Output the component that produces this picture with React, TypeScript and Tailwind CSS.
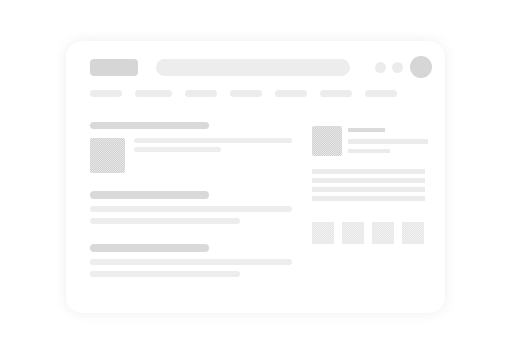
const pills = [32, 37, 32, 32, 32, 32, 32]

function Thumb({ className }: { className: string }) {
  return (
    <div
      className={`shrink-0 rounded-[2px] bg-[repeating-conic-gradient(#d2d2d2_0_25%,#e6e6e6_0_50%)] bg-[length:2px_2px] ${className}`}
    />
  )
}

function Section() {
  return (
    <div className="flex flex-col">
      <div className="h-[8px] w-[119px] rounded-full bg-[#d9d9d9]" />
      <div className="mt-[7px] h-[6px] w-[202px] rounded-full bg-[#ededed]" />
      <div className="mt-[6px] h-[6px] w-[150px] rounded-full bg-[#ededed]" />
    </div>
  )
}

export default function App() {
  return (
    <div className="h-[342px] w-[515px] bg-white pl-[66px] pt-[41px]">
      <div className="h-[272px] w-[379px] rounded-[16px] bg-white pl-[24px] pt-[15px] shadow-[0_0_14px_rgba(0,0,0,0.07)]">
        {/* header */}
        <div className="flex h-[22px] items-center">
          <div className="h-[17px] w-[48px] rounded-[4px] bg-[#d6d6d6]" />
          <div className="ml-[18px] h-[17px] w-[194px] rounded-full bg-[#ededed]" />
          <div className="ml-[25px] h-[11px] w-[11px] rounded-full bg-[#ececec]" />
          <div className="ml-[6px] h-[11px] w-[11px] rounded-full bg-[#ececec]" />
          <div className="ml-[7px] h-[22px] w-[22px] rounded-full bg-[#d6d6d6]" />
        </div>

        {/* nav */}
        <div className="mt-[12px] flex gap-[13px]">
          {pills.map((w, i) => (
            <div key={i} className="h-[7px] rounded-full bg-[#ececec]" style={{ width: w }} />
          ))}
        </div>

        <div className="mt-[25px] flex gap-[20px]">
          {/* left column */}
          <div className="flex w-[202px] flex-col">
            <div className="h-[7px] w-[119px] rounded-full bg-[#d9d9d9]" />
            <div className="mt-[9px] flex gap-[9px]">
              <Thumb className="h-[35px] w-[35px]" />
              <div className="flex flex-col pt-[0px]">
                <div className="h-[5px] w-[158px] rounded-full bg-[#ededed]" />
                <div className="mt-[4px] h-[5px] w-[87px] rounded-full bg-[#ededed]" />
              </div>
            </div>
            <div className="mt-[18px]">
              <Section />
            </div>
            <div className="mt-[20px]">
              <Section />
            </div>
          </div>

          {/* right column */}
          <div className="flex w-[116px] flex-col pt-[4px]">
            <div className="flex gap-[6px]">
              <Thumb className="h-[30px] w-[30px]" />
              <div className="flex flex-col pt-[2px]">
                <div className="h-[4px] w-[37px] bg-[#dadada]" />
                <div className="mt-[7px] h-[5px] w-[80px] bg-[#ebebeb]" />
                <div className="mt-[5px] h-[4px] w-[42px] bg-[#ebebeb]" />
              </div>
            </div>
            <div className="mt-[13px] flex flex-col gap-[4px]">
              {[0, 1, 2, 3].map((i) => (
                <div key={i} className="h-[5px] w-[113px] bg-[#ebebeb]" />
              ))}
            </div>
            <div className="mt-[21px] flex gap-[8px]">
              {[0, 1, 2, 3].map((i) => (
                <div
                  key={i}
                  className="h-[22px] w-[22px] bg-[repeating-conic-gradient(#e6e6e6_0_25%,#f1f1f1_0_50%)] bg-[length:2px_2px]"
                />
              ))}
            </div>
          </div>
        </div>
      </div>
    </div>
  )
}
